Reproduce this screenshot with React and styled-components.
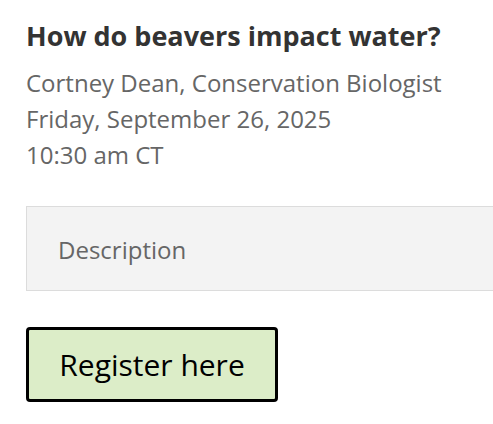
import React from 'react';
import styled, { createGlobalStyle } from 'styled-components';

const Global = createGlobalStyle`
  body {
    margin: 0;
    background: #fff;
    font-family: "Open Sans", "Liberation Sans", sans-serif;
    overflow: hidden;
  }
`;

const Page = styled.article`
  padding: 18px 0 0 26px;
  width: 520px;
`;

const Title = styled.h2`
  margin: 0 0 11px;
  font-size: 27px;
  font-weight: 700;
  line-height: 36px;
  color: #333;
`;

const Meta = styled.p`
  margin: 0;
  font-size: 24px;
  line-height: 36px;
  color: #666;
`;

const Details = styled.div`
  margin-top: 33px;
  background: #f3f3f3;
  border: 1px solid #dcdcdc;
  padding: 26px 31px 23px;
  font-size: 24px;
  line-height: 34px;
  color: #666;
`;

const Button = styled.button`
  margin-top: 36px;
  width: 252px;
  height: 75px;
  background: #dcedc8;
  border: 3px solid #000;
  border-radius: 4px;
  font-family: inherit;
  font-size: 30px;
  color: #000;
  cursor: pointer;
`;

export default function App() {
  return (
    <>
      <Global />
      <Page>
        <Title>How do beavers impact water?</Title>
        <Meta>
          Cortney Dean, Conservation Biologist
          <br />
          Friday, September 26, 2025
          <br />
          10:30 am CT
        </Meta>
        <Details>Description</Details>
        <Button>Register here</Button>
      </Page>
    </>
  );
}
